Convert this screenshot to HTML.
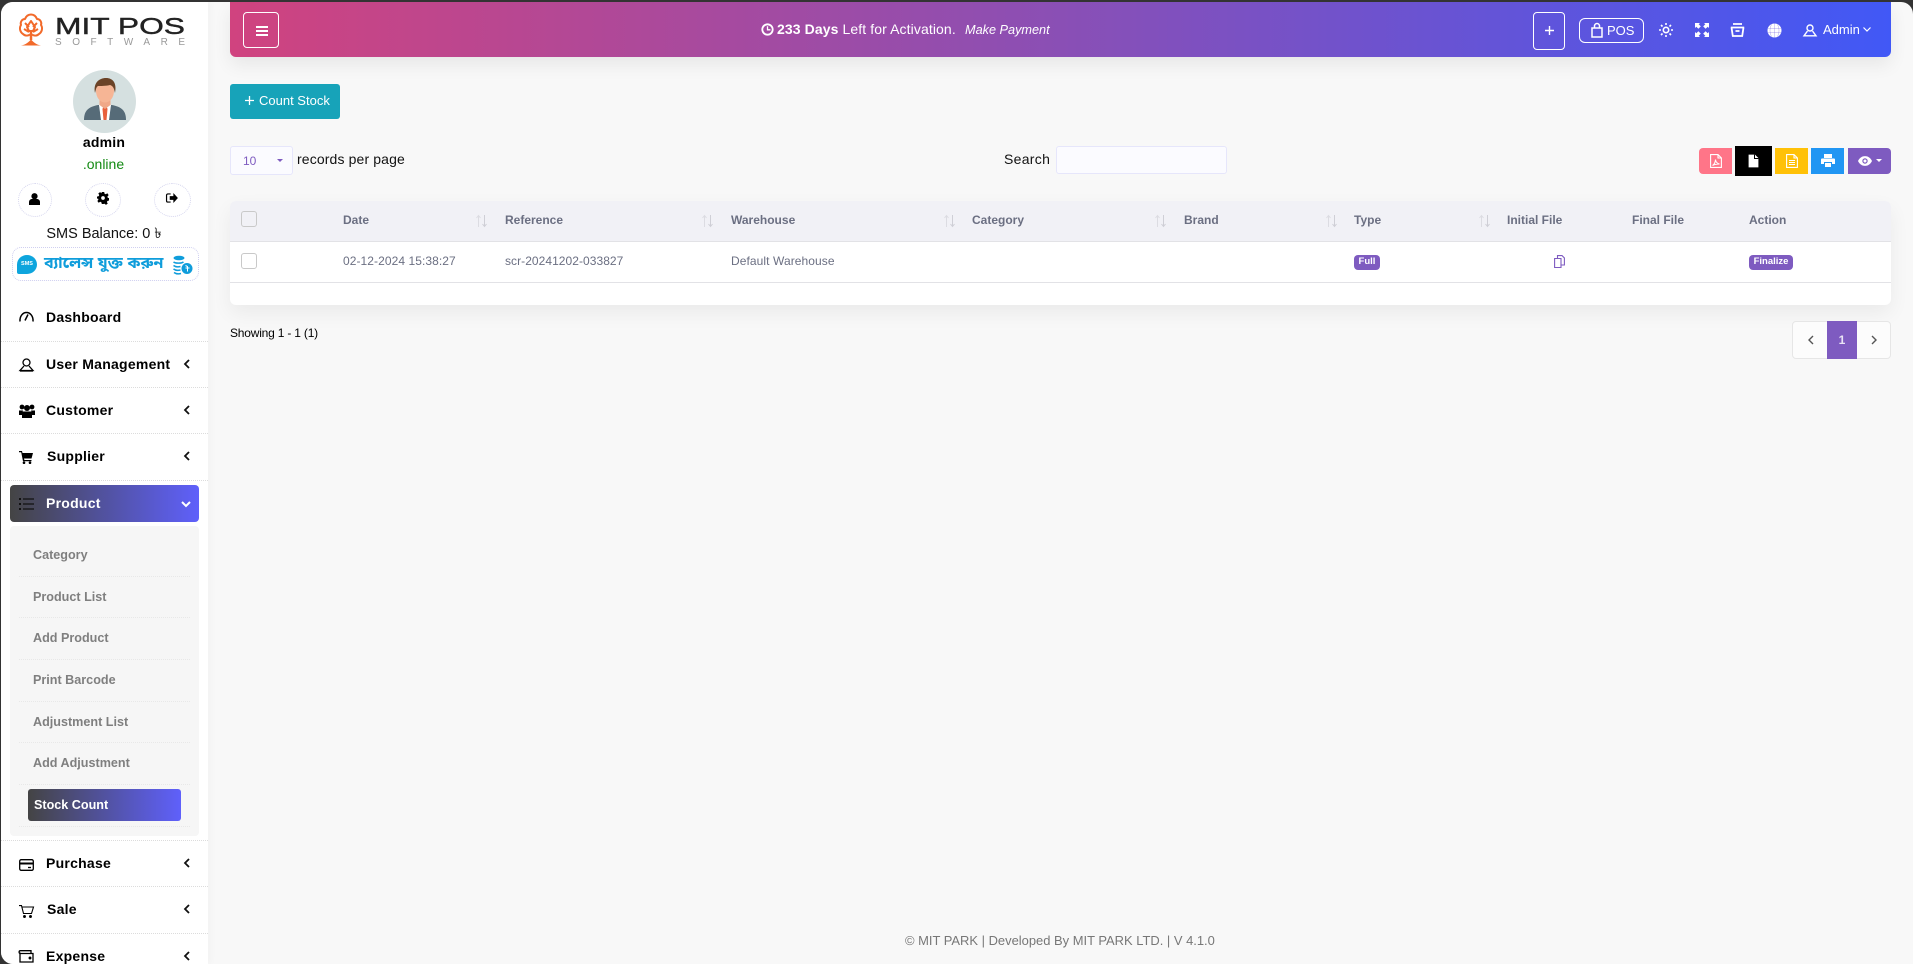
<!DOCTYPE html>
<html lang="en">
<head>
<meta charset="utf-8">
<title>Stock Count</title>
<style>
html,body{margin:0;padding:0;width:1913px;height:964px;overflow:hidden;background:#333;font-family:"Liberation Sans",Arial,sans-serif;color:#000}
*{box-sizing:border-box}
#win{position:absolute;left:1px;top:2px;width:1912px;height:962px;background:#f8f8f8;border-radius:12px 12px 0 12px;overflow:hidden}
.a{position:absolute;white-space:nowrap}
svg{display:block;overflow:visible}
#side{position:absolute;left:0;top:0;width:207px;height:962px;background:#fff;box-shadow:2px 0 8px rgba(0,0,0,.03)}
.sep{position:absolute;left:0;width:207px;height:0;border-top:1px dotted #dcdcdc}
.m{position:absolute;left:45px;font-size:14px;font-weight:700;letter-spacing:.25px;line-height:16px;color:#000}
.ch{position:absolute;left:182px}
.ic{position:absolute;left:18px}
.sub{position:absolute;left:32px;font-size:12.6px;font-weight:700;color:#7f7f7f;line-height:15px;margin-top:1px}
.ssep{position:absolute;left:18px;width:171px;border-top:1px dotted #e8e8e8}
.circ{position:absolute;border:1px dotted #d5d5ee;border-radius:50%;background:#fff}
.th{position:absolute;top:211px;font-size:12px;font-weight:700;color:#6b6f82;line-height:14px}
.td{position:absolute;top:252px;font-size:12px;color:#6b6f82;line-height:14px}
.sort{position:absolute;top:213px}
.cb{position:absolute;left:240px;width:16px;height:16px;border:1px solid #c9c9c9;border-radius:3px;background:#fff}
.cb.h{background:#f1f1f6}
.badge{position:absolute;top:253px;height:15px;background:#7e5bc0;border-radius:4px;color:#fff;font-size:9.5px;font-weight:700;line-height:14px;text-align:center}
.tb{position:absolute;color:#fff}
</style>
</head>
<body>
<div id="win">

<div class="a" style="left:229px;top:0;width:1661px;height:55px;border-radius:0 0 6px 6px;background:linear-gradient(90deg,#d0437f 0%,#8a4fb5 50%,#4158f6 100%);box-shadow:0 8px 18px rgba(0,0,0,.07)"></div>

<div class="a" style="left:242px;top:10px;width:36px;height:36px;border:1px solid #fff;border-radius:4px"></div>
<svg class="a" style="left:255px;top:24px" width="12" height="10"><path d="M0 1h12M0 5h12M0 9h12" stroke="#fff" stroke-width="2"/></svg>

<svg class="a" style="left:760px;top:21px" width="13" height="13" viewBox="0 0 13 13"><circle cx="6.5" cy="6.5" r="5.2" fill="none" stroke="#fff" stroke-width="1.8"/><path d="M6.5 3.2v3.6H9.4" fill="none" stroke="#fff" stroke-width="1.3"/></svg>
<div class="a" style="left:776px;top:19px;font-size:14px;line-height:17px;letter-spacing:.1px;color:#fff"><b>233 Days</b> Left for Activation.</div>
<div class="a" style="left:964px;top:20px;font-size:12.7px;line-height:17px;color:#fff;font-style:italic">Make Payment</div>

<div class="a" style="left:1532px;top:10px;width:32px;height:38px;border:1px solid #fff;border-radius:4px"></div>
<svg class="a" style="left:1544px;top:24px" width="9" height="9"><path d="M4.5 0v9M0 4.5h9" stroke="#fff" stroke-width="1.4"/></svg>
<div class="a" style="left:1578px;top:16px;width:65px;height:25px;border:1px solid #fff;border-radius:6px"></div>
<svg class="a" style="left:1590px;top:21px" width="12" height="15" viewBox="0 0 12 15"><path d="M1 5h10v9H1zM3.5 5V3a2.5 2.5 0 0 1 5 0v2" fill="none" stroke="#fff" stroke-width="1.5"/></svg>
<div class="a tb" style="left:1606px;top:20px;font-size:13px;line-height:17px">POS</div>

<svg class="a" style="left:1658px;top:21px" width="14" height="14" viewBox="0 0 14 14" fill="none" stroke="#fff" stroke-width="1.6"><circle cx="7" cy="7" r="2.7"/><path d="M7 0v2M7 12v2M0 7h2M12 7h2M2 2l1.5 1.5M10.500 10.500 12 12M2 12l1.500-1.500M10.500 3.500 12 2"/></svg>
<svg class="a" style="left:1694px;top:21px" width="14" height="14" viewBox="0 0 14 14" fill="#fff"><path d="M0 0h5L3.700 1.300 5.800 3.400 3.400 5.800 1.300 3.700 0 5zM14 0v5l-1.300-1.300-2.100 2.100-2.400-2.400 2.100-2.100L9 0zM0 14V9l1.300 1.300 2.100-2.100 2.400 2.400-2.100 2.100L5 14zM14 14H9l1.300-1.300-2.100-2.100 2.400-2.400 2.100 2.100L14 9z"/></svg>
<svg class="a" style="left:1729px;top:21px" width="15" height="14" viewBox="0 0 15 14" fill="none" stroke="#fff" stroke-width="1.800"><path d="M3 1h9M.8 4.500h13.400M1.500 4.500l1.300 8.500h9.400l1.300-8.500M5.500 8h4"/></svg>
<svg class="a" style="left:1766px;top:21px" width="15" height="15" viewBox="0 0 15 15"><circle cx="7.500" cy="7.500" r="7" fill="#fff"/><path d="M1 5.500h13M1 9.500h13M7.500 .5v14M4.500 1.500c-2 4-2 8 0 12M10.500 1.500c2 4 2 8 0 12" stroke="#6a58dc" stroke-opacity=".55" stroke-width=".5" fill="none"/></svg>
<svg class="a" style="left:1802px;top:22px" width="14" height="13" viewBox="0 0 14 13" fill="none" stroke="#fff" stroke-width="1.400"><circle cx="7" cy="4" r="3"/><path d="M4.500 7 1 11.800h12L9.500 7"/></svg>
<div class="a tb" style="left:1822px;top:19px;font-size:13px;line-height:17px">Admin</div>
<svg class="a" style="left:1862px;top:25px" width="8" height="5"><path d="M.5.500 4 4 7.500.5" fill="none" stroke="#fff" stroke-width="1.200"/></svg>

<div class="a" style="left:229px;top:82px;width:110px;height:35px;background:#17a3b9;border-radius:3px"></div>
<svg class="a" style="left:244px;top:94px" width="9" height="9"><path d="M4.500 0v9M0 4.500h9" stroke="#fff" stroke-width="1.300"/></svg>
<div class="a" style="left:258px;top:91px;font-size:13px;line-height:15px;color:#fff">Count Stock</div>

<div class="a" style="left:229px;top:144px;width:63px;height:29px;background:#fbfbff;border:1px solid #e6e6fb;border-radius:3px"></div>
<div class="a" style="left:242px;top:152px;font-size:12px;line-height:14px;color:#7e5bc0">10</div>
<div class="a" style="left:276px;top:157px;width:0;height:0;border:3px solid transparent;border-top:3px solid #7e5bc0"></div>
<div class="a" style="left:296px;top:149px;font-size:14px;line-height:17px;letter-spacing:.13px;color:#111">records per page</div>

<div class="a" style="left:1003px;top:149px;font-size:14px;line-height:17px;letter-spacing:.3px;color:#111">Search</div>
<div class="a" style="left:1055px;top:144px;width:171px;height:28px;background:#fbfbff;border:1px solid #e6e6fb;border-radius:3px"></div>

<div class="a" style="left:1698px;top:146px;width:33px;height:26px;background:#ff7588;border-radius:4px 0 0 4px"></div>
<svg class="a" style="left:1709px;top:152px" width="12" height="14" viewBox="0 0 12 14" fill="none" stroke="#fff" stroke-width="1.100"><path d="M.6.600H8L11.400 4v9.400H.6zM8 .6V4h3.400M2.500 11.500c2-1 3-4 3-6 0 2 1.500 4 4 4.500-2.500 0-5 .5-7 1.500z"/></svg>
<div class="a" style="left:1734px;top:144px;width:37px;height:30px;background:#000"></div>
<svg class="a" style="left:1747px;top:152px" width="11" height="14" viewBox="0 0 11 14"><path d="M.6.600h6.400L10.400 4v9.400H.6z" fill="#fff"/><path d="M6.500.6V4.500h3.900" fill="none" stroke="#000"/></svg>
<div class="a" style="left:1774px;top:146px;width:33px;height:26px;background:#ffc107"></div>
<svg class="a" style="left:1785px;top:152px" width="12" height="14" viewBox="0 0 12 14" fill="none" stroke="#fff" stroke-width="1.100"><path d="M.6.600H8L11.400 4v9.400H.6zM8 .6V4h3.400M3 6.500h6M3 8.500h6M3 10.500h6"/></svg>
<div class="a" style="left:1810px;top:146px;width:33px;height:26px;background:#2196f3"></div>
<svg class="a" style="left:1820px;top:152px" width="14" height="13" viewBox="0 0 14 13" fill="#fff"><path d="M3 0h8v4H3zM1 4.500h12a1 1 0 0 1 1 1V10h-3V8H3v2H0V5.500a1 1 0 0 1 1-1zM4 9h6v4H4z"/></svg>
<div class="a" style="left:1847px;top:146px;width:43px;height:26px;background:#7e5bc0;border-radius:0 4px 4px 0"></div>
<svg class="a" style="left:1857px;top:154px" width="14" height="10" viewBox="0 0 14 10"><path d="M0 5c3-6.500 11-6.500 14 0-3 6.500-11 6.500-14 0z" fill="#fff"/><circle cx="7" cy="5" r="2.700" fill="#7e5bc0"/><circle cx="7" cy="5" r="1.500" fill="#fff"/></svg>
<div class="a" style="left:1875px;top:157px;width:0;height:0;border:3px solid transparent;border-top:3px solid #fff"></div>

<div class="a" style="left:229px;top:199px;width:1661px;height:104px;background:#fff;border-radius:6px;box-shadow:0 8px 20px rgba(0,0,0,.06);overflow:hidden">
  <div style="position:absolute;left:0;top:0;width:100%;height:41px;background:#f1f1f6;border-bottom:1px solid #e2e2e6"></div>
  <div style="position:absolute;left:0;top:81px;width:100%;height:1px;background:#e2e2e6"></div>
</div>
<div class="cb h" style="top:209px"></div>
<div class="cb" style="top:251px"></div>

<div class="th" style="left:342px">Date</div>
<div class="th" style="left:504px">Reference</div>
<div class="th" style="left:730px">Warehouse</div>
<div class="th" style="left:971px">Category</div>
<div class="th" style="left:1183px">Brand</div>
<div class="th" style="left:1353px">Type</div>
<div class="th" style="left:1506px">Initial File</div>
<div class="th" style="left:1631px">Final File</div>
<div class="th" style="left:1748px">Action</div>

<svg class="sort" style="left:475px" width="11" height="12" viewBox="0 0 11 12"><path d="M2.500 12V1M.5 3l2-2.500L4.500 3" fill="none" stroke="#dcdce2"/><path d="M8.500 0v11M6.500 9l2 2.500 2-2.500" fill="none" stroke="#cfcfd6"/></svg>
<svg class="sort" style="left:701px" width="11" height="12" viewBox="0 0 11 12"><path d="M2.500 12V1M.5 3l2-2.500L4.500 3" fill="none" stroke="#dcdce2"/><path d="M8.500 0v11M6.500 9l2 2.500 2-2.500" fill="none" stroke="#cfcfd6"/></svg>
<svg class="sort" style="left:943px" width="11" height="12" viewBox="0 0 11 12"><path d="M2.500 12V1M.5 3l2-2.500L4.500 3" fill="none" stroke="#dcdce2"/><path d="M8.500 0v11M6.500 9l2 2.500 2-2.500" fill="none" stroke="#cfcfd6"/></svg>
<svg class="sort" style="left:1154px" width="11" height="12" viewBox="0 0 11 12"><path d="M2.500 12V1M.5 3l2-2.500L4.500 3" fill="none" stroke="#dcdce2"/><path d="M8.500 0v11M6.500 9l2 2.500 2-2.500" fill="none" stroke="#cfcfd6"/></svg>
<svg class="sort" style="left:1325px" width="11" height="12" viewBox="0 0 11 12"><path d="M2.500 12V1M.5 3l2-2.500L4.500 3" fill="none" stroke="#dcdce2"/><path d="M8.500 0v11M6.500 9l2 2.500 2-2.500" fill="none" stroke="#cfcfd6"/></svg>
<svg class="sort" style="left:1478px" width="11" height="12" viewBox="0 0 11 12"><path d="M2.500 12V1M.5 3l2-2.500L4.500 3" fill="none" stroke="#dcdce2"/><path d="M8.500 0v11M6.500 9l2 2.500 2-2.500" fill="none" stroke="#cfcfd6"/></svg>

<div class="td" style="left:342px;letter-spacing:.07px">02-12-2024 15:38:27</div>
<div class="td" style="left:504px;letter-spacing:.05px">scr-20241202-033827</div>
<div class="td" style="left:730px;letter-spacing:.08px">Default Warehouse</div>
<div class="badge" style="left:1353px;width:26px">Full</div>
<svg class="a" style="left:1553px;top:253px" width="11" height="13" viewBox="0 0 11 13" fill="none" stroke="#7e5bc0" stroke-width="1.100"><path d="M.6 3.500h6.400v9H.6zM3.500 3.500V.6H8L10.400 3v7H7"/></svg>
<div class="badge" style="left:1748px;width:44px">Finalize</div>

<div class="a" style="left:229px;top:324px;font-size:12px;line-height:14px;letter-spacing:-.2px;color:#000">Showing 1 - 1 (1)</div>

<div class="a" style="left:1791px;top:319px;width:99px;height:38px;background:#fcfcfc;border:1px solid #e6e6e6;border-radius:4px"></div>
<div class="a" style="left:1826px;top:319px;width:30px;height:38px;background:#7e5bc0;color:#e9e4f5;font-size:12px;font-weight:700;line-height:38px;text-align:center">1</div>
<svg class="a" style="left:1807px;top:333px" width="6" height="10"><path d="M5 1 1 5l4 4" fill="none" stroke="#555" stroke-width="1.400"/></svg>
<svg class="a" style="left:1870px;top:333px" width="6" height="10"><path d="M1 1l4 4-4 4" fill="none" stroke="#555" stroke-width="1.400"/></svg>

<div class="a" style="left:904px;top:932px;font-size:12.95px;line-height:14px;color:#777">© MIT PARK | Developed By MIT PARK LTD. | V 4.1.0</div>

<div id="side">
  <svg class="a" style="left:17px;top:11px" width="26" height="33" viewBox="0 0 26 33" fill="none" stroke="#f26a2a" stroke-width="2" stroke-linejoin="round"><path d="M13 1.500c3 0 5 2 6 4.500 3 0 5 3 4 6 2 3 1 7-2 9-2 2-5 2-7 .5M13 1.500c-3 0-5 2-6 4.500-3 0-5 3-4 6-2 3-1 7 2 9 2 2 5 2 7 .5"/><path d="M13 8l4 6-2 4h-4l-2-4zM7 10l4 4M19 10l-4 4M6 16l5 3M20 16l-5 3"/><path d="M13 19v8" stroke-width="2.500"/><path d="M3 32.500c5-1 7-3 10-6 3 3 5 5 10 6z" fill="#f26a2a" stroke="none"/></svg>
  <svg class="a" style="left:54px;top:14px" width="132" height="32" viewBox="0 0 132 32">
    <text x="0" y="18" font-family="Liberation Sans,sans-serif" font-size="23" fill="#222" stroke="#222" stroke-width=".4" textLength="130" lengthAdjust="spacingAndGlyphs">MIT POS</text>
    <text x="0" y="29" font-family="Liberation Sans,sans-serif" font-size="10" fill="#999" textLength="130">SOFTWARE</text>
  </svg>

  <div class="a" style="left:72px;top:68px;width:63px;height:63px;border-radius:50%;background:#d5e0e0"></div>
  <svg class="a" style="left:83px;top:76px" width="42" height="44" viewBox="0 0 42 44">
    <path d="M0 42c0-9 4-13 14-15h14c10 2 14 6 14 15z" fill="#566b78"/>
    <path d="M15 27h12l-2 15h-8z" fill="#fff"/>
    <path d="M19.500 28h3l1 3-1 11h-3l-1-11z" fill="#e8603c"/>
    <path d="M15.500 20h11v7l-5.500 4-5.500-4z" fill="#f0a888"/>
    <ellipse cx="21" cy="13" rx="9" ry="11.500" fill="#f6b595"/>
    <path d="M11 15C9 5 15 0 22 0c7 0 11 5 9 15-1-5-2-7-5-8-4 1-10 1-12 1-2 1-2 4-3 7z" fill="#6b4327"/>
  </svg>
  <div class="a" style="left:0;width:207px;top:132px;text-align:center;font-size:14px;font-weight:700;line-height:17px;letter-spacing:.2px;padding-right:1px">admin</div>
  <div class="a" style="left:0;width:207px;top:154px;text-align:center;font-size:14px;line-height:17px;color:#138a13;padding-right:2px">.online</div>

  <div class="circ" style="left:17px;top:181px;width:34px;height:34px"></div>
  <div class="circ" style="left:84px;top:181px;width:36px;height:34px"></div>
  <div class="circ" style="left:153px;top:181px;width:37px;height:34px"></div>
  <svg class="a" style="left:28px;top:191px" width="11" height="12" viewBox="0 0 12 13"><circle cx="6" cy="3.500" r="3.400"/><path d="M0 13V10c0-2.500 2-3.500 3.500-3.500h5C10 6.500 12 7.500 12 10v3z"/></svg>
  <svg class="a" style="left:96px;top:190px" width="12" height="12" viewBox="0 0 13 13"><path d="M5.200 0h2.600l.4 1.900 1.300.6L11.200 1.400l1.400 2-1.300 1.500.3 1.300 1.400.5v2.500l-1.700.5-.6 1.300 1 1.500-2 1.400-1.400-1.200-1.300.2L7.800 13H5.200l-.4-1.800-1.300-.6-1.700 1-1.400-1.900 1.100-1.500-.4-1.300L0 7.500V5l1.900-.5.5-1.300-1-1.600 1.900-1.400L4.800 1.400z"/><circle cx="6.500" cy="6.500" r="2" fill="#fff"/></svg>
  <svg class="a" style="left:165px;top:191px" width="12" height="10" viewBox="0 0 13 11"><path d="M5 1H2a1.500 1.500 0 0 0-1.500 1.500v6A1.500 1.500 0 0 0 2 10h3" fill="none" stroke="#000" stroke-width="1.300"/><path d="M4 3.500h4V0l5 5.500L8 11V7.500H4z"/></svg>

  <div class="a" style="left:0;width:207px;top:224px;text-align:center;font-size:14.5px;line-height:17px;color:#111;padding-right:1px">SMS Balance: 0 ৳</div>

  <div class="a" style="left:11px;top:245px;width:187px;height:34px;border:1px dotted #cfcff0;border-radius:9px"></div>
  <div class="a" style="left:16px;top:253px;width:20px;height:19px;background:#0ea5dd;border-radius:50% 50% 50% 2px;color:#fff;font-size:5.5px;font-weight:700;text-align:center;line-height:18px">SMS</div>
  <div class="a" style="left:43px;top:252px;font-size:16px;line-height:20px;font-weight:700;color:#0f9ddb;font-family:'Liberation Sans','Noto Sans Bengali','Lohit Bengali',sans-serif">ব্যালেন্স যুক্ত করুন</div>
  <svg class="a" style="left:171px;top:253px" width="22" height="20" viewBox="0 0 22 20" fill="none" stroke="#0f9ddb" stroke-width="1.500"><ellipse cx="7" cy="3" rx="5.500" ry="2.300" fill="#0f9ddb" stroke="none"/><path d="M1.500 7c2 1.500 8 1.500 10 0M1.500 10.500c2 1.500 5 1.500 7 1M1.500 14c2 1.500 5 1.500 7 1M2 17.500c2 1.500 5 1.500 7 1"/><circle cx="15" cy="13.500" r="5.500" fill="#0f9ddb" stroke="none"/><path d="M13.500 10.500l2 1v5M13.500 13h4" stroke="#fff" stroke-width="1"/></svg>

  <div class="m" style="top:307px">Dashboard</div>
  <svg class="ic" style="top:309px" width="15" height="11" viewBox="0 0 15 11" fill="none" stroke="#000" stroke-width="1.500"><path d="M1 10.500C.5 5 4 1.500 7.500 1.500S14.500 5 14 10.500M6 9.500l3-6"/></svg>
  <div class="sep" style="top:339px"></div>

  <div class="m" style="top:354px">User Management</div>
  <svg class="ic" style="top:356px" width="15" height="14" viewBox="0 0 15 14" fill="none" stroke="#000" stroke-width="1.300"><circle cx="7.500" cy="4.500" r="3.500"/><path d="M5 8 1 12.500h13L10 8"/><path d="M1 13h13"/></svg>
  <svg class="ch" style="top:357px" width="7" height="10"><path d="M6 1 2 5l4 4" fill="none" stroke="#111" stroke-width="1.800"/></svg>
  <div class="sep" style="top:385px"></div>

  <div class="m" style="top:400px">Customer</div>
  <svg class="ic" style="top:402px" width="16" height="14" viewBox="0 0 16 14"><circle cx="3" cy="3" r="2.400"/><circle cx="13" cy="3" r="2.400"/><circle cx="8" cy="4" r="3"/><path d="M0 6.500h4L3 11H0zM12 6.500h4V11h-3zM4 7.500h8l1 2V14H3V9.500z"/></svg>
  <svg class="ch" style="top:403px" width="7" height="10"><path d="M6 1 2 5l4 4" fill="none" stroke="#111" stroke-width="1.800"/></svg>
  <div class="sep" style="top:431px"></div>

  <div class="m" style="top:446px;left:46px">Supplier</div>
  <svg class="ic" style="top:449px" width="14" height="13" viewBox="0 0 14 13"><path d="M0 0h3l.5 2H14l-1.500 5.500H5L5.400 9H12.500v1.200H4L2.200 1.300H0z"/><circle cx="5" cy="11.700" r="1.300"/><circle cx="11" cy="11.700" r="1.300"/></svg>
  <svg class="ch" style="top:449px" width="7" height="10"><path d="M6 1 2 5l4 4" fill="none" stroke="#111" stroke-width="1.800"/></svg>
  <div class="sep" style="top:478px"></div>

  <div class="a" style="left:9px;top:483px;width:189px;height:37px;border-radius:4px;background:linear-gradient(90deg,#444 0%,#5f60fb 100%)"></div>
  <div class="m" style="top:493px;color:#fff">Product</div>
  <svg class="ic" style="top:496px" width="15" height="12" viewBox="0 0 15 12"><path d="M4 1h11M4 6h11M4 11h11" stroke="#111" stroke-width="1.300"/><path d="M0 1h2M0 6h2M0 11h2" stroke="#111" stroke-width="2"/></svg>
  <svg class="a" style="left:180px;top:499px" width="10" height="7"><path d="M1 1l4 4 4-4" fill="none" stroke="#fff" stroke-width="2"/></svg>

  <div class="a" style="left:9px;top:524px;width:189px;height:310px;background:#f6f6f6;border-radius:4px"></div>
  <div class="sub" style="top:545px">Category</div>
  <div class="ssep" style="top:574px"></div>
  <div class="sub" style="top:587px">Product List</div>
  <div class="ssep" style="top:615px"></div>
  <div class="sub" style="top:628px">Add Product</div>
  <div class="ssep" style="top:657px"></div>
  <div class="sub" style="top:670px">Print Barcode</div>
  <div class="ssep" style="top:699px"></div>
  <div class="sub" style="top:712px">Adjustment List</div>
  <div class="ssep" style="top:740px"></div>
  <div class="sub" style="top:753px">Add Adjustment</div>
  <div class="ssep" style="top:782px"></div>
  <div class="a" style="left:27px;top:787px;width:153px;height:32px;border-radius:3px;background:linear-gradient(90deg,#444 0%,#5f60fb 100%)"></div>
  <div class="sub" style="top:795px;left:33px;color:#fff">Stock Count</div>
  <div class="ssep" style="top:824px"></div>
  <div class="sep" style="top:838px"></div>

  <div class="m" style="top:853px">Purchase</div>
  <svg class="ic" style="top:857px" width="15" height="12" viewBox="0 0 15 12" fill="none" stroke="#000" stroke-width="1.300"><rect x=".7" y=".7" width="13.600" height="10.600" rx="1.500"/><path d="M.7 4.500h13.600" stroke-width="2"/><path d="M9 8.500h3"/></svg>
  <svg class="ch" style="top:856px" width="7" height="10"><path d="M6 1 2 5l4 4" fill="none" stroke="#111" stroke-width="1.800"/></svg>
  <div class="sep" style="top:884px"></div>

  <div class="m" style="top:899px;left:46px">Sale</div>
  <svg class="ic" style="top:903px" width="15" height="13" viewBox="0 0 15 13" fill="none" stroke="#000" stroke-width="1.100"><path d="M0 .6h2.500L4.500 8.500h8L14.500 2H3"/><circle cx="5.500" cy="11.500" r=".9" fill="#000"/><circle cx="11.500" cy="11.500" r=".9" fill="#000"/></svg>
  <svg class="ch" style="top:902px" width="7" height="10"><path d="M6 1 2 5l4 4" fill="none" stroke="#111" stroke-width="1.800"/></svg>
  <div class="sep" style="top:931px"></div>

  <div class="m" style="top:946px">Expense</div>
  <svg class="ic" style="top:948px" width="15" height="13" viewBox="0 0 15 13" fill="none" stroke="#000" stroke-width="1.300"><path d="M1 2.500V12h13V3.500H1.500a1 1 0 0 1 0-2.800H12v2.800"/><circle cx="11" cy="8" r=".8" fill="#000"/></svg>
  <svg class="ch" style="top:949px" width="7" height="10"><path d="M6 1 2 5l4 4" fill="none" stroke="#111" stroke-width="1.800"/></svg>
</div>

</div>
</body>
</html>
